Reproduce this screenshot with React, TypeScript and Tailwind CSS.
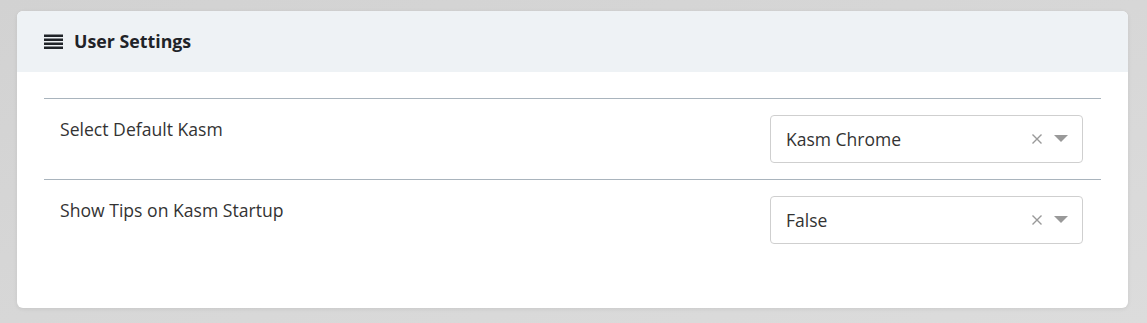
import React from 'react';

const rows = [
    { label: 'Select Default Kasm', value: 'Kasm Chrome' },
    { label: 'Show Tips on Kasm Startup', value: 'False' },
];

const BarsIcon = () => (
    <svg width="19" height="15" viewBox="0 0 19 15" className="shrink-0">
        <rect x="0" y="0.5" width="19" height="2.5" fill="#1f2328" />
        <rect x="0" y="4.5" width="19" height="2.5" fill="#1f2328" />
        <rect x="0" y="8.5" width="19" height="2.5" fill="#1f2328" />
        <rect x="0" y="12.5" width="19" height="2.5" fill="#1f2328" />
    </svg>
);

const SelectBox = ({ value }: { value: string }) => (
    <div className="w-[313px] h-[48px] border border-[#cfcfcf] rounded-[4px] bg-white flex items-center pl-[15px] pr-[14px]">
        <span className="flex-1 text-[17.5px] text-[#333]">{value}</span>
        {/* clear button */}
        <svg width="10" height="10" viewBox="0 0 10 10" className="mr-[12px]">
            <path d="M0.5 0.5 L9.5 9.5 M9.5 0.5 L0.5 9.5" stroke="#999" strokeWidth="1.4" />
        </svg>
        <svg width="14" height="8" viewBox="0 0 14 8">
            <path d="M0 0 L14 0 L7 7 Z" fill="#999" />
        </svg>
    </div>
);

export default function App() {
    return (
        <div
            className="w-[1147px] h-[323px] bg-gradient-to-br from-[#d2d2d2] to-[#dcdcdc] pt-[11px] px-[17px]"
            style={{ fontFamily: '"Open Sans", "Noto Sans", sans-serif' }}
        >
            <div className="w-[1111px] h-[297px] bg-white rounded-[6px] overflow-hidden shadow-[0_1px_4px_rgba(0,0,0,0.08)]">
                <div className="h-[61px] bg-[#eef2f5] flex items-center gap-[11px] px-[27px]">
                    <BarsIcon />
                    <span className="text-[17.8px] font-bold text-[#1f2328]">User Settings</span>
                </div>
                <div className="px-[27px] pt-[26px]">
                    {rows.map(r => (
                        <div key={r.label} className="border-t border-[#a9b4bd] flex items-start justify-between pl-4 pr-[18px] py-4">
                            <span className="text-[17.6px] text-[#333] leading-6 mt-[2px]">{r.label}</span>
                            <SelectBox value={r.value} />
                        </div>
                    ))}
                </div>
            </div>
        </div>
    );
}
